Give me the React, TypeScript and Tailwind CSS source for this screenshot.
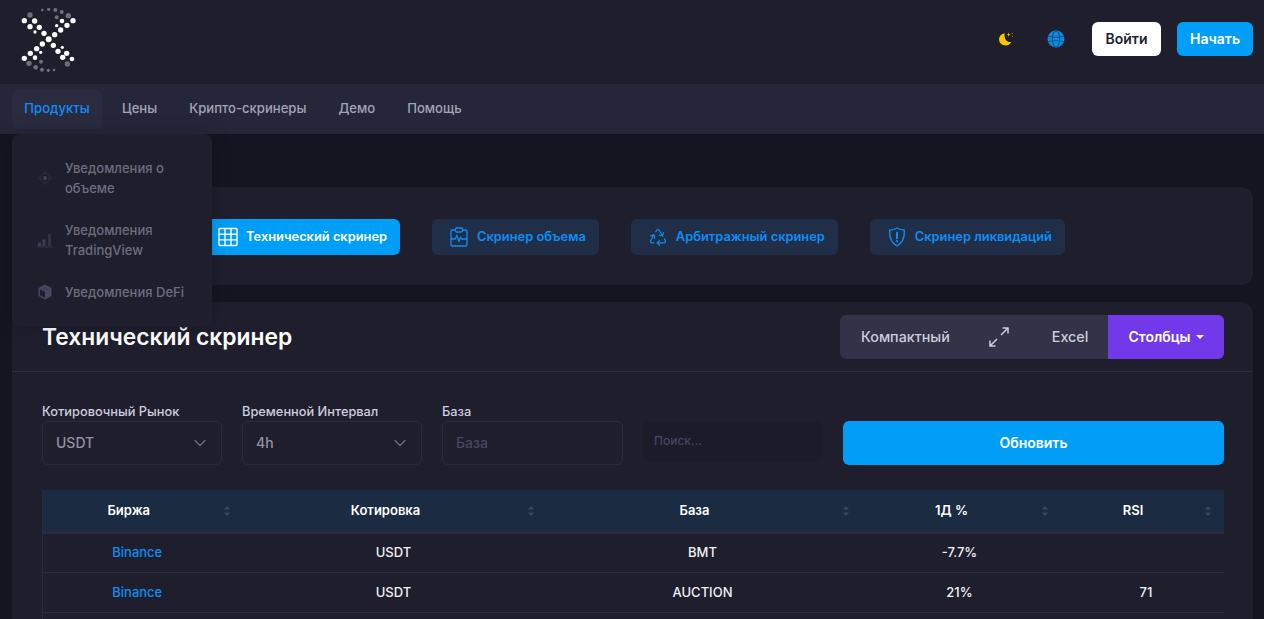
import { ChevronDown, Recycle } from "lucide-react";

const WHITE_DOTS = [
  [43, 62, 8], [74, 63, 8], [60, 80, 8], [88, 82, 8], [75, 96, 5], [102, 100, 8], [116, 118, 9],
  [134, 104, 8], [152, 90, 8], [171, 76, 8], [189, 62, 8], [156, 63, 7], [140, 77, 5], [97, 132, 8],
  [80, 146, 8], [61, 160, 8], [43, 175, 8], [75, 173, 7], [92, 157, 5], [130, 136, 8], [144, 154, 8],
  [158, 172, 8], [186, 177, 7], [170, 160, 8], [157, 142, 5],
];

const GRAY_DOTS = [
  [60, 45, 8], [175, 47, 8], [155, 36, 6], [136, 30, 6], [116, 28, 5], [97, 30, 4], [140, 52, 6],
  [57, 190, 8], [77, 202, 7], [96, 209, 6], [115, 211, 5], [132, 210, 4], [93, 185, 6], [172, 192, 8],
];

const NAV_ITEMS = ["Цены", "Крипто-скринеры", "Демо", "Помощь"];

const COLUMNS = [
  { label: "Биржа", width: "w-[194px]", th: "pl-0 pr-[22px]", td: "pl-0 pr-[5px]", sort: "right-[7px]" },
  { label: "Котировка", width: "w-[304px]", th: "pl-[14px] pr-[20px]", td: "pl-[14px] pr-[4px]", sort: "right-[7px]" },
  { label: "База", width: "w-[315px]", th: "pl-[13px] pr-[20px]", td: "pl-[13px] pr-[4px]", sort: "right-[7px]" },
  { label: "1Д %", width: "w-[199px]", th: "pl-[13px] pr-[20px]", td: "pl-[13px] pr-[4px]", sort: "right-[7px]" },
  { label: "RSI", width: "w-[169px]", th: "pl-[8px] pr-[20px]", td: "pl-[14px] pr-0", sort: "right-[13px]" },
];

const ROWS = [
  ["Binance", "USDT", "BMT", "-7.7%", ""],
  ["Binance", "USDT", "AUCTION", "21%", "71"],
];

function Logo() {
  return (
    <svg viewBox="0 0 240 240" className="mb-1 h-20 w-20">
      {GRAY_DOTS.map(([x, y, r]) => (
        <circle key={`${x}-${y}`} cx={x} cy={y} r={r} fill="#6f6f78" />
      ))}
      {WHITE_DOTS.map(([x, y, r]) => (
        <circle key={`${x}-${y}`} cx={x} cy={y} r={r} fill="#ffffff" />
      ))}
    </svg>
  );
}

function MoonIcon() {
  return (
    <svg viewBox="0 0 16 16" className="h-4 w-4">
      <path
        d="M6.6 2.2A6.3 6.3 0 0 0 1 8.4a6.3 6.3 0 0 0 6.4 6.1c2.5 0 4.7-1.4 5.7-3.6-3.6.9-7.4-2.4-6.5-8.7Z"
        fill="#ffc700"
      />
      <path d="m10.6 1.6.5 1.6 1.6.5-1.6.5-.5 1.6-.5-1.6-1.6-.5 1.6-.5Z" fill="#ffc700" />
      <circle cx="14.2" cy="2.4" r=".6" fill="#ffc700" opacity=".6" />
      <circle cx="14.4" cy="5.4" r=".6" fill="#ffc700" opacity=".6" />
    </svg>
  );
}

function GlobeIcon() {
  return (
    <svg viewBox="0 0 18 18" className="h-[18px] w-[18px]">
      <circle cx="9" cy="9" r="8.5" fill="#0a8fe0" />
      <g fill="none" stroke="#14508a" strokeWidth="1.1">
        <ellipse cx="9" cy="9" rx="3.6" ry="8.3" />
        <path d="M1 6.2c4.6 1.2 11.4 1.2 16 0M1 11.8c4.6-1.2 11.4-1.2 16 0" />
      </g>
    </svg>
  );
}

function GridIcon() {
  return (
    <svg viewBox="0 0 20 20" className="h-5 w-5" fill="none" stroke="currentColor" strokeWidth="1.4">
      <rect x="1" y="1.5" width="18" height="17" rx="1" />
      <path d="M1 7.2h18M1 12.9h18M7 1.5v17M13 1.5v17" />
    </svg>
  );
}

function ClipboardPulseIcon() {
  return (
    <svg viewBox="0 0 18 20" className="h-5 w-[18px]" fill="none" stroke="currentColor" strokeWidth="1.3">
      <path d="M5.5 3H2.2C1.5 3 1 3.5 1 4.2v13.6c0 .7.5 1.2 1.2 1.2h13.6c.7 0 1.2-.5 1.2-1.2V4.2c0-.7-.5-1.2-1.2-1.2h-3.3" />
      <rect x="5.5" y="1" width="7" height="4" rx="1.2" />
      <path d="M1 12h4.2l1.6-3.6 2 6 1.8-4.4.9 2H17" strokeLinejoin="round" />
    </svg>
  );
}

function ShieldAlertIcon() {
  return (
    <svg viewBox="0 0 18 20" className="h-5 w-[18px]" fill="none" stroke="currentColor" strokeWidth="1.4">
      <path d="M9 1c2.2 1.3 4.8 2 7.4 2.2.3 6.6-1.7 12.6-7.4 15.8C3.3 15.8 1.3 9.8 1.6 3.2 4.2 3 6.8 2.3 9 1Z" strokeLinejoin="round" />
      <path d="M9 5.6v5.6" strokeWidth="2" strokeLinecap="round" />
      <circle cx="9" cy="14.2" r="1.1" fill="currentColor" stroke="none" />
    </svg>
  );
}

function ExpandIcon() {
  return (
    <svg viewBox="0 0 20 20" className="h-5 w-5" fill="none" stroke="currentColor" strokeWidth="1.5">
      <path d="M12 8l7-7M13.5 1H19v5.5M8 12l-7 7M1 13.5V19h5.5" />
    </svg>
  );
}

function TargetIcon() {
  return (
    <svg viewBox="0 0 16 16" className="h-4 w-4 shrink-0">
      <circle cx="8" cy="8" r="4.6" fill="none" stroke="#2e2e42" strokeWidth="1" />
      <circle cx="8" cy="8" r="2" fill="#44445e" />
      <path d="M8 .8v2.6M8 12.6v2.6M.8 8h2.6M12.6 8h2.6" stroke="#2e2e42" strokeWidth="1" />
    </svg>
  );
}

function BarsIcon() {
  return (
    <svg viewBox="0 0 16 16" className="h-4 w-4 shrink-0" fill="#3f3f57">
      <rect x="1" y="10.5" width="3" height="3.5" />
      <rect x="5.5" y="7.5" width="3" height="6.5" opacity=".85" />
      <rect x="11" y="2" width="3" height="12" opacity=".6" />
      <rect x="0" y="14.4" width="16" height="1" opacity=".7" />
    </svg>
  );
}

function CubeIcon() {
  return (
    <svg viewBox="0 0 14 16" className="h-4 w-4 shrink-0">
      <path d="M7 .5 13.5 4v8L7 15.5.5 12V4Z" fill="#474761" />
      <path d="M7 2.2 11.8 5 7 7.6 2.2 5Z" fill="#1e1e2d" opacity=".15" />
      <path d="M2 5.4 7 8v5.8L2 11.2Z" fill="#1e1e2d" />
    </svg>
  );
}

function SortIcon({ className }: { className: string }) {
  return (
    <svg viewBox="0 0 6 12" className={`absolute top-[15px] h-3 w-[6px] ${className}`} fill="#3a4a60">
      <path d="M3 1 6 4.5H0ZM3 11 0 7.5h6Z" />
    </svg>
  );
}

function ScreenerTab({ active, label, icon }: { active?: boolean; label: string; icon: React.ReactNode }) {
  return (
    <div
      className={`flex h-9 items-center gap-2 rounded-md pl-[17px] pr-[13px] text-[12.85px] font-semibold ${
        active ? "bg-[#009ef7] text-white" : "bg-[#212e48] text-[#0d8ef5]"
      }`}
    >
      <span className="flex w-5 justify-center">{icon}</span>
      <span>{label}</span>
    </div>
  );
}

function Field({ label, children }: { label: string; children: React.ReactNode }) {
  return (
    <div className="w-[180px]">
      <div className="mb-[2px] h-[18px] pt-[1px] text-[12.8px] font-medium leading-5 text-[#cdcdde]">{label}</div>
      {children}
    </div>
  );
}

function SelectBox({ value }: { value: string }) {
  return (
    <div className="flex h-11 items-center justify-between rounded-md border border-[#2b2b40] pl-[13px] pr-[11px] text-sm font-medium text-[#92929f]">
      <span>{value}</span>
      <ChevronDown size={20} strokeWidth={1.5} className="text-[#6d6d80]" />
    </div>
  );
}

export default function App() {
  return (
    <div className="relative h-[619px] w-full overflow-hidden bg-[#151521] font-['Inter',sans-serif]">
      <header className="flex h-[84px] items-center justify-between bg-[#1e1e2d] pl-[10px] pr-[11px]">
        <Logo />
        <div className="mb-[6px] flex items-center">
          <MoonIcon />
          <div className="ml-[33px]">
            <GlobeIcon />
          </div>
          <button type="button" className="ml-[27px] h-[34px] w-[69px] rounded-md bg-white text-sm font-semibold text-[#1e1e2d]">
            Войти
          </button>
          <button type="button" className="ml-4 h-[34px] w-[76px] rounded-md bg-[#009ef7] text-sm font-semibold text-white">
            Начать
          </button>
        </div>
      </header>

      <nav className="flex h-[50px] items-center gap-[6px] bg-[#26263a] pl-3 text-[13.1px] font-medium text-[#a1a5b7]">
        <div className="mr-px flex h-[39px] w-[90px] items-center justify-center rounded-md bg-[#2b2b40] text-[#0d8ef5]">Продукты</div>
        {NAV_ITEMS.map((item) => (
          <div key={item} className="px-[13px]">
            {item}
          </div>
        ))}
      </nav>

      <div className="absolute left-3 top-[134px] z-10 flex h-[193px] w-[200px] flex-col rounded-lg bg-[#1e1e2d] pt-6 text-[13px] font-medium leading-[20px] text-[#6d6d80] shadow-[0_0_20px_rgba(0,0,0,0.2)]">
        <div className="flex items-center gap-3 pl-[25px] pr-5">
          <TargetIcon />
          <span>Уведомления о объеме</span>
        </div>
        <div className="mt-[22px] flex items-center gap-3 pl-[25px] pr-5">
          <BarsIcon />
          <span>Уведомления TradingView</span>
        </div>
        <div className="mt-[22px] flex items-center gap-3 pl-[25px] pr-2">
          <CubeIcon />
          <span>Уведомления DeFi</span>
        </div>
      </div>

      <main className="pl-3 pr-[11px] pt-[53px]">
        <section className="flex h-[98px] items-center justify-center gap-8 rounded-xl bg-[#1e1e2d] pl-px pt-[2px]">
          <ScreenerTab active label="Технический скринер" icon={<GridIcon />} />
          <ScreenerTab label="Скринер объема" icon={<ClipboardPulseIcon />} />
          <ScreenerTab label="Арбитражный скринер" icon={<Recycle size={20} strokeWidth={1.4} />} />
          <ScreenerTab label="Скринер ликвидаций" icon={<ShieldAlertIcon />} />
        </section>

        <section className="mt-[17px] rounded-xl bg-[#1e1e2d]">
          <div className="flex h-[70px] items-center justify-between border-b border-[#2b2b40] pl-[30px] pr-[29px]">
            <h1 className="pt-[1px] text-[22.8px] font-semibold text-white">Технический скринер</h1>
            <div className="flex h-11 w-[384px] items-center overflow-hidden rounded-md bg-[#323248] text-[14.3px] font-medium text-[#cdcdde]">
              <span className="ml-[21px]">Компактный</span>
              <span className="ml-[39px]">
                <ExpandIcon />
              </span>
              <span className="ml-[43px]">Excel</span>
              <div className="ml-auto flex h-full w-[116px] items-center justify-center gap-[5px] bg-[#7239ea] text-sm font-semibold text-white">
                Столбцы
                <span className="mt-[1px] h-0 w-0 border-x-[4px] border-t-[4px] border-x-transparent border-t-white" />
              </div>
            </div>
          </div>

          <div className="pl-[30px] pr-[29px] pt-[29px]">
            <div className="flex items-start gap-5">
              <Field label="Котировочный Рынок">
                <SelectBox value="USDT" />
              </Field>
              <Field label="Временной Интервал">
                <SelectBox value="4h" />
              </Field>
              <Field label="База">
                <div className="flex h-11 w-[181px] items-center rounded-md border border-[#2b2b40] pl-[13px] text-sm font-medium text-[#474761]">
                  База
                </div>
              </Field>
              <div className="mt-5 flex h-10 w-[181px] items-center rounded-md bg-[#1b1b29] pl-3 text-xs font-medium text-[#474761]">
                Поиск...
              </div>
              <button type="button" className="mt-5 h-11 flex-1 rounded-md bg-[#009ef7] text-sm font-semibold text-white">
                Обновить
              </button>
            </div>

            <table className="mt-[25px] w-[1181px] table-fixed border-l border-[#2b2b40] text-center text-[13px] font-medium text-[#f1f1f4]">
              <colgroup>
                {COLUMNS.map((col) => (
                  <col key={col.label} className={col.width} />
                ))}
              </colgroup>
              <thead>
                <tr className="h-[42px] border-b-[3px] border-[#2b2b40] bg-[#1b2b42]">
                  {COLUMNS.map((col) => (
                    <th key={col.label} className={`relative font-semibold text-white ${col.th}`}>
                      {col.label}
                      <SortIcon className={col.sort} />
                    </th>
                  ))}
                </tr>
              </thead>
              <tbody>
                {ROWS.map((row, i) => (
                  <tr key={i} className="h-10 border-b border-[#2b2b40]">
                    {row.map((cell, j) => (
                      <td key={j} className={`${COLUMNS[j].td} ${i === 1 ? "pt-px" : ""} ${j === 0 ? "text-[#0d8ef5]" : ""}`}>
                        {cell}
                      </td>
                    ))}
                  </tr>
                ))}
                <tr className="h-10">
                  <td colSpan={5} />
                </tr>
              </tbody>
            </table>
          </div>
        </section>
      </main>
    </div>
  );
}
